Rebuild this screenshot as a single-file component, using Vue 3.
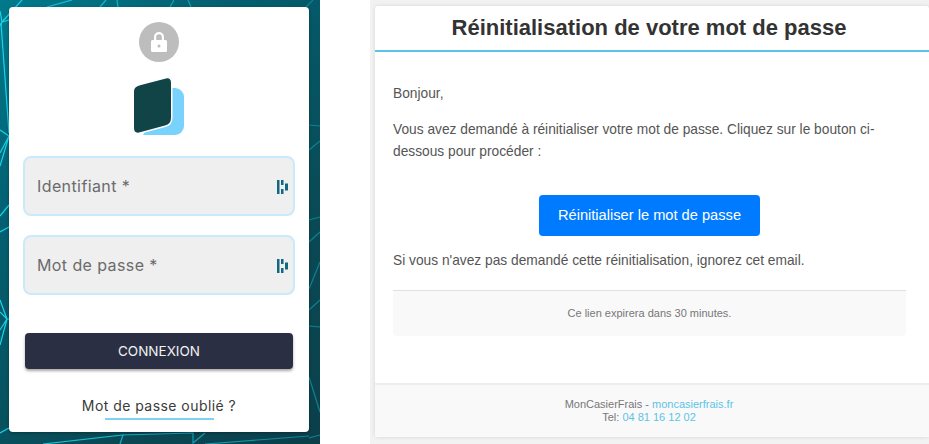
<template>
  <div class="page">
    <!-- login -->
    <section class="login">
      <svg class="bg-lines" width="320" height="444" viewBox="0 0 320 444">
        <defs>
          <linearGradient id="lineFade" gradientUnits="userSpaceOnUse" x1="0" y1="0" x2="320" y2="0">
            <stop offset="0" stop-color="#14d4ee" />
            <stop offset="0.5" stop-color="#12a5bd" />
            <stop offset="1" stop-color="#0f7f90" />
          </linearGradient>
        </defs>
        <path v-for="(d, i) in lines" :key="i" :d="d" fill="none" stroke="url(#lineFade)" stroke-width="1.2" />
      </svg>
      <div class="card">
        <div class="lock">
          <svg width="20" height="24" viewBox="0 0 20 24">
            <path d="M5 11V7a5 5 0 0 1 10 0v4h-2.200V7a2.800 2.800 0 0 0-5.600 0v4z" fill="#fff" />
            <path d="M3.500 10h13a1.500 1.500 0 0 1 1.500 1.500v9a1.500 1.500 0 0 1-1.500 1.500h-13A1.500 1.500 0 0 1 2 20.500v-9A1.500 1.500 0 0 1 3.500 10zM10 14.500a1.500 1.500 0 1 0 0 3 1.500 1.500 0 0 0 0-3z" fill="#fff" fill-rule="evenodd" />
          </svg>
        </div>
        <svg class="logo" width="50" height="58" viewBox="0 0 50 58">
          <path d="M37 10h4a9 9 0 0 1 9 9v29a9 9 0 0 1-9 9H9z" fill="#78d2fc" />
          <path d="M7 7L32 .5Q37-.5 37 5V40Q37 46 31 47.500L5 54.500Q0 55.500 0 50V13Q0 8.500 7 7z" fill="#114446" stroke="#fff" stroke-width="3" paint-order="stroke" />
        </svg>
        <div v-for="f in fields" :key="f" class="field">
          <span>{{ f }} *</span>
          <svg class="dash-icon" width="12" height="14" viewBox="0 0 12 14">
            <path d="M0 0h2.500v14H0zM4 0h2.500v5H4zM4 9h2.500v5H4zM8 3.500h3v7H8z" fill="#12697f" />
          </svg>
        </div>
        <button class="connect">CONNEXION</button>
        <div class="forgot">Mot de passe oublié ?</div>
        <div class="forgot-line"></div>
      </div>
    </section>

    <!-- email preview -->
    <section class="mail-wrap">
      <div class="mail">
        <header class="mail-head">
          <h1>Réinitialisation de votre mot de passe</h1>
        </header>
        <div class="mail-body">
          <p>Bonjour,</p>
          <p>Vous avez demandé à réinitialiser votre mot de passe. Cliquez sur le bouton ci-dessous pour procéder :</p>
          <div class="btn-row"><a class="reset">Réinitialiser le mot de passe</a></div>
          <p>Si vous n'avez pas demandé cette réinitialisation, ignorez cet email.</p>
          <div class="notice">Ce lien expirera dans 30 minutes.</div>
        </div>
        <footer class="mail-foot">
          MonCasierFrais - <a>moncasierfrais.fr</a><br />
          Tel: <a>04 81 16 12 02</a>
        </footer>
      </div>
    </section>
  </div>
</template>

<script setup>
const fields = ['Identifiant', 'Mot de passe']

// triangulated background, only the parts outside the card show
const lines = [
  'M2 22L22 0', 'M0 26L2 22L0 11', 'M2 22L9 20', 'M1 23L9 133',
  'M47 7L72 0', 'M100 7L106 0', 'M117 0L118 7', 'M170 7L174 0', 'M188 0L191 7', 'M306 7L313 0',
  'M0 130L9 136L0 153', 'M9 136L0 166', 'M0 216L9 205', 'M0 232L9 227',
  'M0 300L7 319L0 312', 'M0 330L7 319L0 345', 'M7 319H9', 'M0 433L9 428',
  'M43 444L123 435L120 444', 'M123 435L193 433V443L205 433', 'M205 444L309 436',
  'M309 125L320 126', 'M309 150L320 141', 'M309 220L320 217', 'M309 242L320 232',
  'M309 289L320 262', 'M309 310L320 300', 'M309 326L320 327', 'M309 377L320 412', 'M309 438L320 435',
]
</script>

<style>
html, body { margin: 0; background: #fff; }
</style>

<style scoped>
.page {
  width: 929px;
  height: 444px;
  display: flex;
  overflow: hidden;
  background: #fff;
}

.login {
  position: relative;
  width: 320px;
  height: 444px;
  flex: none;
  box-sizing: border-box;
  padding: 7px 11px 12px 9px;
  background: linear-gradient(135deg, #007a8c 0%, #035f70 30%, #0a4a55 70%, #0b3f4a 100%);
}

.bg-lines {
  position: absolute;
  top: 0;
  left: 0;
}

.card {
  position: relative;
  height: 425px;
  background: #fff;
  border-radius: 4px;
  box-shadow: 0 1px 3px rgba(0, 0, 0, 0.3);
  display: flex;
  flex-direction: column;
  align-items: center;
  padding: 15px 14px 0;
  box-sizing: border-box;
  font-family: Inter, "Noto Sans", sans-serif;
}

.lock {
  width: 40px;
  height: 40px;
  border-radius: 50%;
  background: #bdbdbd;
  display: flex;
  align-items: center;
  justify-content: center;
}

.logo {
  margin-top: 16px;
  margin-bottom: 20px;
}

.field {
  width: 272px;
  height: 60px;
  box-sizing: border-box;
  border: 2px solid #c9eafc;
  border-radius: 8px;
  background: #efefef;
  display: flex;
  align-items: center;
  justify-content: space-between;
  padding: 0 4px 0 12px;
  margin-bottom: 19px;
  color: #6b6b6b;
  font-size: 16px;
  letter-spacing: 0.4px;
}

.dash-icon {
  margin-top: 1px;
}

.connect {
  width: 268px;
  height: 36px;
  margin-top: 19px;
  border: none;
  border-radius: 4px;
  background: #2b2f43;
  color: #f2f2f2;
  font-family: inherit;
  font-size: 13.5px;
  box-shadow: 0 2px 3px rgba(0, 0, 0, 0.35);
}

.forgot {
  margin-top: 28px;
  font-size: 14px;
  letter-spacing: 0.45px;
  color: #3a3a3a;
}

.forgot-line {
  width: 109px;
  height: 2px;
  margin-top: 4px;
  background: #7fd1f7;
}

.mail-wrap {
  margin-left: 50px;
  width: 559px;
  height: 444px;
  flex: none;
  box-sizing: border-box;
  background: #f2f2f2;
  padding: 6px 0 7px 5px;
  font-family: "Liberation Sans", Arial, sans-serif;
}

.mail {
  height: 431px;
  background: #fff;
  border-radius: 3px;
  box-shadow: 0 0 4px rgba(0, 0, 0, 0.12);
  display: flex;
  flex-direction: column;
}

.mail-head {
  height: 44px;
  padding-right: 6px;
  border-bottom: 2px solid #5bc4e6;
  display: flex;
  align-items: center;
  justify-content: center;
}

.mail-head h1 {
  margin: 0;
  font-size: 22px;
  font-weight: 700;
  color: #333;
}

.mail-body {
  flex: 1;
  padding: 31px 23px 0 18px;
  font-size: 13.76px;
  line-height: 22px;
  color: #555;
}

.mail-body p {
  margin: 0 0 14px;
}

.btn-row {
  display: flex;
  justify-content: center;
  margin: 32px 0 14px;
}

.reset {
  background: #007bff;
  color: #fff;
  border-radius: 4px;
  padding: 10px 19px;
  font-size: 14.65px;
  line-height: 21px;
}

.notice {
  height: 45px;
  border-top: 1px solid #e0e0e0;
  border-radius: 0 0 4px 4px;
  background: #f9f9f9;
  text-align: center;
  font-size: 11px;
  line-height: 44px;
  color: #777;
  margin-top: 18px;
}

.mail-foot {
  height: 54px;
  box-sizing: border-box;
  border-top: 2px solid #eee;
  background: #f9f9f9;
  text-align: center;
  font-size: 11px;
  line-height: 13px;
  padding: 13px 6px 0 0;
  color: #777;
}

.mail-foot a {
  color: #5bc4e6;
}
</style>
